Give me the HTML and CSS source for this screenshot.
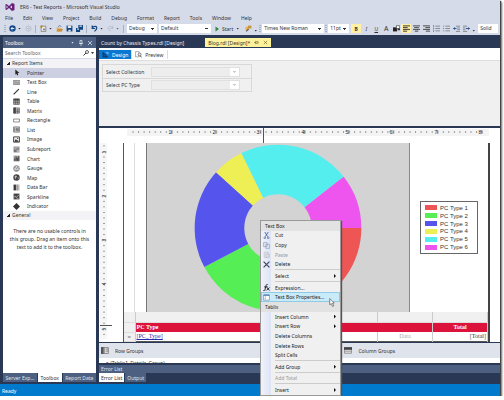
FILE: index.html
```html
<!DOCTYPE html>
<html lang="en">
<head>
    <meta charset="UTF-8">
    <meta name="viewport" content="width=device-width, initial-scale=1.0">
    <title>ER6 - Test Reports - Microsoft Visual Studio</title>
    <link rel="stylesheet" href="styles.css">
</head>
<body>

<div class="window">
    <header class="titlebar">
        <svg class="vs-logo" viewBox="0 0 20 16"><path fill="#68217a" fill-rule="evenodd" d="M14 0l5 2v12l-5 2-6-6-5 4-2-1V3l2-1 5 4zM14 5l-4 3 4 3zM3 5v6l3-3z"/></svg>
        <span>ER6 - Test Reports - Microsoft Visual Studio</span>
    </header>

    <nav class="menubar">
        <button>File</button>
        <button>Edit</button>
        <button>View</button>
        <button>Project</button>
        <button>Build</button>
        <button>Debug</button>
        <button>Format</button>
        <button>Report</button>
        <button>Tools</button>
        <button>Window</button>
        <button>Help</button>
    </nav>

    <div class="toolbar">
        <span class="grip"></span>
        <button class="tool wide" aria-label="Back"><svg viewBox="0 0 12 12"><circle cx="6" cy="6" r="5.5" fill="#164a8b"/><path d="M9 6H3.500M6 3.500L3.500 6 6 8.500" stroke="#fff" fill="none" stroke-width="1.500"/></svg><i class="caret"></i></button>
        <button class="tool" aria-label="Forward"><svg viewBox="0 0 12 12"><circle cx="6" cy="6" r="4.500" fill="none" stroke="#a5acba"/><path d="M3.500 6H8M6 4l2 2-2 2" stroke="#a5acba" fill="none"/></svg></button>
        <span class="divider"></span>
        <button class="tool wide" aria-label="New"><svg viewBox="0 0 12 12"><path d="M2 2h8v9H2z" fill="#eee" stroke="#555"/><path d="M0 3h5M2.500 0v5" stroke="#c68a1e" stroke-width="2"/><path d="M5 6h4v3H5z" fill="#888"/></svg><i class="caret"></i></button>
        <button class="tool" aria-label="Open"><svg viewBox="0 0 12 12"><path d="M1 4h4l1 1h4v6H1z" fill="#dcb67a"/><path d="M3 7h9l-2 4H1z" fill="#c7913a"/><path d="M4 3c1-3 4-2 5 0" stroke="#164a8b" fill="none"/></svg></button>
        <button class="tool" aria-label="Save"><svg viewBox="0 0 12 12"><path d="M1 1h10v10H1z" fill="#10457f"/><path d="M3 1h6v4H3zM4 8h4v3H4z" fill="#dfe6f2"/></svg></button>
        <button class="tool" aria-label="Save all"><svg viewBox="0 0 12 12"><path d="M4 0h8v8H4zM0 5h7v7H0z" fill="#10457f"/><path d="M6 1h4v2H6zM2 6h3v2H2z" fill="#dfe6f2"/></svg></button>
        <span class="divider"></span>
        <button class="tool wide" aria-label="Undo"><svg viewBox="0 0 12 12"><path d="M2 1v5h5M2 5c3-4 8-3 8 0 0 2-2 4-4 6" stroke="#10457f" stroke-width="2" fill="none"/></svg><i class="caret"></i></button>
        <button class="tool wide faded" aria-label="Redo"><svg viewBox="0 0 12 12"><path d="M10 1v5H5M10 5C7 1 2 2 2 5c0 2 2 4 4 6" stroke="#9299a8" stroke-width="1" fill="none"/></svg><i class="caret"></i></button>
        <span class="divider"></span>
        <select class="combo combo-config" aria-label="Configuration"><option>Debug</option></select>
        <select class="combo combo-platform" aria-label="Platform"><option>Default</option></select>
        <button class="start"><svg viewBox="0 0 8 10"><path d="M1 0l7 5-7 5z" fill="#2f8a3b"/></svg>Start<i class="caret"></i></button>
        <button class="tool" aria-label="Find in files"><svg viewBox="0 0 12 12"><path d="M1 3h6v6H1z" fill="#e0b060"/><path d="M5 1h6v5H5z" fill="#c9953c"/><path d="M2 11l4-4" stroke="#555" stroke-width="2"/></svg></button>
        <span class="overflow"></span>
        <span class="grip"></span>
        <select class="combo combo-font" aria-label="Font"><option>Times New Roman</option></select>
        <span class="grip"></span>
        <select class="combo combo-size" aria-label="Font size"><option>11pt</option></select>
        <div class="format">
            <button class="tool active"><b>B</b></button>
            <button class="tool"><em>I</em></button>
            <button class="tool"><u>U</u></button>
            <button class="tool letter">A</button>
            <button class="tool" aria-label="Background colour"><svg viewBox="0 0 12 12"><path d="M0 4h7v7H0z" fill="#222"/><path d="M6 1h5v5H6z" fill="#fff" stroke="#333"/><path d="M8 6h4v3H8z" fill="#333"/></svg></button>
            <button class="tool active" aria-label="Align left"><svg viewBox="0 0 12 12"><path d="M0 1.500h12M0 4.500h8M0 7.500h12M0 10.500h7" stroke="#222" stroke-width="1.500"/></svg></button>
            <button class="tool" aria-label="Align centre"><svg viewBox="0 0 12 12"><path d="M0 1.500h12M2 4.500h8M0 7.500h12M3 10.500h6" stroke="#333" stroke-width="1.500"/></svg></button>
            <button class="tool" aria-label="Align right"><svg viewBox="0 0 12 12"><path d="M0 1.500h12M4 4.500h8M0 7.500h12M5 10.500h7" stroke="#333" stroke-width="1.500"/></svg></button>
            <button class="tool" aria-label="Numbered list"><svg viewBox="0 0 12 12"><path d="M1 0v4M1 5v3M1 9v3M4 2h8M4 6h8M4 10h8" stroke="#555"/></svg></button>
            <button class="tool" aria-label="Bulleted list"><svg viewBox="0 0 12 12"><path d="M0 2h2M0 6h2M0 10h2M4 2h8M4 6h8M4 10h8" stroke="#555"/></svg></button>
            <button class="tool" aria-label="Decrease indent"><svg viewBox="0 0 12 12"><path d="M5 2h7M7 5h5M7 8h5M5 11h7" stroke="#555"/><path d="M6 6H1M3 4L1 6l2 2" stroke="#164a8b" fill="none" stroke-width="1.500"/></svg></button>
            <button class="tool" aria-label="Increase indent"><svg viewBox="0 0 12 12"><path d="M0 2h7M0 5h4M0 8h4M0 11h7" stroke="#555"/><path d="M5 6h6M9 4l2 2-2 2" stroke="#164a8b" fill="none" stroke-width="1.500"/></svg></button>
        </div>
        <span class="overflow"></span>
        <select class="combo combo-line" aria-label="Border style"><option>Solid</option></select>
    </div>

    <main class="workspace">
        <aside class="toolbox">
            <div class="panel-title"><span>Toolbox</span><i class="caret light"></i>
                <svg viewBox="0 0 8 12"><path d="M2 1h4v6H2zM0 7h8M4 7v5" stroke="#dfe4ee" fill="none" stroke-width="1.500"/></svg>
                <svg viewBox="0 0 8 12"><path d="M0 2l8 8M8 2l-8 8" stroke="#dfe4ee" stroke-width="1.500"/></svg>
            </div>
            <div class="search">
                <input type="text" placeholder="Search Toolbox" aria-label="Search Toolbox">
                <svg viewBox="0 0 12 12"><circle cx="8" cy="4" r="3" fill="none" stroke="#333" stroke-width="1.500"/><path d="M6 6l-5 5" stroke="#333" stroke-width="2"/></svg>
                <i class="caret"></i>
            </div>
            <div class="toolbox-list">
                <div class="group-title">Report Items</div>
                <ul class="items">
                    <li class="selected"><svg viewBox="0 0 12 12"><path d="M4 1v9l2-2 1 3 2-1-1-3h3z" fill="#222"/></svg>Pointer</li>
                    <li><svg viewBox="0 0 12 12"><path d="M.5 2.500h11v7H.5z" fill="#ddd" stroke="#555"/><path d="M2 5h5M2 7h7M9 4v4" stroke="#444"/></svg>Text Box</li>
                    <li><svg viewBox="0 0 12 12"><path d="M1 11l9-9" stroke="#333" stroke-width="2"/></svg>Line</li>
                    <li><svg viewBox="0 0 12 12"><path d="M1 2h10v9H1zM1 5h10M1 8h10M4.500 3v8M8 3v8" stroke="#444" fill="#bbb"/><path d="M1 1h10v3H1z" fill="#444"/></svg>Table</li>
                    <li><svg viewBox="0 0 12 12"><path d="M1 1.500h10v9H1zM5 5h6M5 8h6M8 3v8" stroke="#444" fill="#ccc"/><path d="M1 1h4v10H1z" fill="#444"/></svg>Matrix</li>
                    <li><svg viewBox="0 0 12 12"><path d="M1 3.500h10v5H1z" stroke="#444" fill="#fff"/></svg>Rectangle</li>
                    <li><svg viewBox="0 0 12 12"><path d="M1 1.500h10v9H1z" stroke="#444" fill="#ddd"/><path d="M2 4h2M2 6h2M2 8h2M5 4h5M5 6h5M5 8h5" stroke="#333"/></svg>List</li>
                    <li><svg viewBox="0 0 12 12"><path d="M1 1.500h10v9H1z" stroke="#333" stroke-width="1.500" fill="#eee"/><path d="M2 10l3-5 2 3 1-1 2 3z" fill="#333"/><circle cx="8" cy="4" r="1" fill="#333"/></svg>Image</li>
                    <li><svg viewBox="0 0 12 12"><path d="M1 1h10v10H1z" fill="#777"/><path d="M2 3h8M2 5h4M7 7h3v3H7z" stroke="#eee" fill="none"/></svg>Subreport</li>
                    <li><svg viewBox="0 0 12 12"><path d="M1 1h10v10H1z" fill="#999"/><path d="M3 10V6M5.500 10V3M8 10V5M10 10V2" stroke="#333" stroke-width="1.500"/></svg>Chart</li>
                    <li><svg viewBox="0 0 12 12"><circle cx="6" cy="6" r="5" stroke="#555" fill="#ddd"/><path d="M3 6l1-3M8 3l-2 4M9 6h1M4 9h4" stroke="#444"/></svg>Gauge</li>
                    <li><svg viewBox="0 0 12 12"><circle cx="6" cy="6" r="5.500" fill="#444"/><path d="M3 3l3 0 1 2-2 1v3L3 7zM8 6l2 0-1 3z" fill="#bbb"/></svg>Map</li>
                    <li><svg viewBox="0 0 12 12"><path d="M1 1h4v10H1z" fill="#333"/><path d="M6 1h2v10H6z" fill="#666"/><path d="M9 1h2v10H9z" fill="#aaa"/></svg>Data Bar</li>
                    <li><svg viewBox="0 0 12 12"><path d="M1 1h10v10H1z" fill="#444"/><path d="M2 8l2-3 2 3 4-5M6 10h4" stroke="#ddd" fill="none"/></svg>Sparkline</li>
                    <li><svg viewBox="0 0 12 12"><path d="M6 0l6 6-6 6-6-6z" fill="#333"/></svg>Indicator</li>
                </ul>
                <div class="group-title">General</div>
                <p class="hint">There are no usable controls in<br>this group. Drag an item onto this<br>text to add it to the toolbox.</p>
            </div>
            <div class="tabs">
                <button>Server Exp...</button>
                <button class="current">Toolbox</button>
                <button>Report Data</button>
            </div>
        </aside>

        <section class="editor">
            <div class="doc-tabs">
                <button class="doc-tab">Count by Chassis Types.rdl [Design]</button>
                <button class="doc-tab current">Blog.rdl [Design]*
                    <svg viewBox="0 0 12 12"><path d="M0 6h4M4 2v8M5 4h5v4H5" stroke="#6b5e2b" fill="none" stroke-width="1.500"/></svg>
                    <svg viewBox="0 0 12 12"><path d="M2 2l8 8M10 2l-8 8" stroke="#6b5e2b" stroke-width="1.500"/></svg>
                </button>
            </div>

            <div class="view-tabs">
                <button class="current"><svg viewBox="0 0 12 12"><path d="M1 1v10h10zM3 6l3 3H3z" fill="#0b3a66" fill-rule="evenodd"/><path d="M6 2h5v4z" fill="#8cc4ee"/></svg>Design</button>
                <button><svg viewBox="0 0 12 12"><path d="M1 1h6v9H1z" fill="#fff" stroke="#777"/><circle cx="8" cy="6" r="2.500" fill="#eee" stroke="#444"/><path d="M9 8l2 3" stroke="#444" stroke-width="1.500"/></svg>Preview</button>
            </div>

            <div class="parameters">
                <div class="param-grid">
                    <div class="param"><label for="collection">Select Collection</label><select id="collection" disabled></select></div>
                    <div class="param"><label for="pctype">Select PC Type</label><select id="pctype" disabled></select></div>
                </div>
            </div>

            <div class="design">
                <svg class="ruler-top" viewBox="0 0 372 15">
                    <defs>
                        <pattern id="ticks" x="4" width="5.540" height="15" patternUnits="userSpaceOnUse"><path d="M.5 3v2" stroke="#999"/></pattern>
                        <pattern id="halves" x="-17" width="44.300" height="15" patternUnits="userSpaceOnUse"><path d="M21.500 2v4" stroke="#777"/></pattern>
                    </defs>
                    <path d="M4 1h362v7H4z" fill="#f4f4f4"/>
                    <path d="M8 0h356v9H8z" fill="url(#ticks)"/>
                    <path d="M8 0h356v9H8z" fill="url(#halves)"/>
                    <g>
                        <text x="47" y="6">1</text><text x="91" y="6">2</text><text x="135" y="6">3</text><text x="180" y="6">4</text>
                        <text x="224" y="6">5</text><text x="268" y="6">6</text><text x="313" y="6">7</text><text x="357" y="6">8</text>
                    </g>
                    <path d="M140.500 0v15" stroke="#555"/>
                </svg>
                <div class="canvas">
                    <svg class="ruler-side" viewBox="0 0 14 198">
                        <defs>
                            <pattern id="vticks" y="8" width="14" height="5.540" patternUnits="userSpaceOnUse"><path d="M4 .5h2" stroke="#999"/></pattern>
                        </defs>
                        <path d="M1 0h7v196H1z" fill="#f6f6f6"/>
                        <path d="M0 2h14v192H0z" fill="url(#vticks)"/>
                        <g>
                            <text transform="translate(7 9) rotate(-90)">1</text>
                            <text transform="translate(7 53) rotate(-90)">2</text>
                            <text transform="translate(7 97) rotate(-90)">3</text>
                            <text transform="translate(7 141) rotate(-90)">4</text>
                            <text transform="translate(7 186) rotate(-90)">5</text>
                        </g>
                        <path d="M1 182.500h12" stroke="#555"/>
                    </svg>
                    <div class="report">
                        <div class="chart-row">
                            <svg class="chart" viewBox="0 1 264 169">
                                <!-- centre 132,86  outer 84  inner 34 -->
                                <path fill="#ee5555" d="M216 86A84 84 0 0 1 160.700 164.900L143.600 117.900A34 34 0 0 0 166 86z"/>
                                <path fill="#55ee55" d="M160.700 164.900A84 84 0 0 1 57.800 125.400L102 102A34 34 0 0 0 143.600 117.900z"/>
                                <path fill="#5555ee" d="M57.800 125.400A84 84 0 0 1 69.600 29.800L106.700 63.300A34 34 0 0 0 102 102z"/>
                                <path fill="#eeee55" d="M69.600 29.800A84 84 0 0 1 95.200 10.500L117.100 55.400A34 34 0 0 0 106.700 63.300z"/>
                                <path fill="#55eeee" d="M95.200 10.500A84 84 0 0 1 198.200 34.300L158.800 65.100A34 34 0 0 0 117.100 55.400z"/>
                                <path fill="#ee55ee" d="M198.200 34.300A84 84 0 0 1 216 86L166 86A34 34 0 0 0 158.800 65.100z"/>
                            </svg>
                            <ul class="legend">
                                <li><i class="red"></i>PC Type 1</li>
                                <li><i class="green"></i>PC Type 2</li>
                                <li><i class="blue"></i>PC Type 3</li>
                                <li><i class="yellow"></i>PC Type 4</li>
                                <li><i class="cyan"></i>PC Type 5</li>
                                <li><i class="magenta"></i>PC Type 6</li>
                            </ul>
                        </div>
                        <table class="tablix">
                            <colgroup><col class="col-handle"><col><col class="col-data"><col class="col-data"></colgroup>
                            <tr class="handles"><td></td><td></td><td></td><td></td></tr>
                            <tr class="head"><td></td><th colspan="2">PC Type</th><th class="total">Total</th></tr>
                            <tr class="detail"><td>≡</td><td><u>[PC_Type]</u></td><td class="ghost">Data</td><td class="sum">[Total]</td></tr>
                        </table>
                    </div>
                </div>
            </div>

            <div class="groups">
                <div><svg viewBox="0 0 12 10"><path d="M0 .5h11v9H0zM5 1v8M7 3h4M7 6h4" fill="#ddd" stroke="#666"/><path d="M0 0h4v10H0z" fill="#555"/></svg>Row Groups</div>
                <div><svg viewBox="0 0 12 10"><path d="M.5 1h11v8H.5zM1 6h10" fill="#eee" stroke="#666"/><path d="M0 0h12v4H0z" fill="#444"/></svg>Column Groups</div>
            </div>
            <div class="group-rows"><span>≡ (Tablix1_Details_Group)</span></div>
            <div class="error-title">Error List</div>
            <div class="tabs">
                <button class="current">Error List</button>
                <button>Output</button>
            </div>
        </section>
    </main>

    <footer class="status">Ready</footer>
</div>

<!-- right click menu over the report -->
<div class="context-menu">
    <div class="menu-head">Text Box</div>
    <button><svg viewBox="0 0 12 12"><path d="M3 0l5 8M9 0L4 8" stroke="#4a5f9a" stroke-width="1.500"/><circle cx="3" cy="10" r="1.500" fill="none" stroke="#33508f"/><circle cx="9" cy="10" r="1.500" fill="none" stroke="#33508f"/></svg>Cut</button>
    <button><svg viewBox="0 0 12 12"><path d="M1 1h6v7H1zM5 4h6v7H5z" fill="#e4e9f4" stroke="#8391b5"/></svg>Copy</button>
    <button disabled><svg viewBox="0 0 12 12"><path d="M2 2h7v9H2zM5 5h6v6H5z" fill="#e3e3e8" stroke="#b9bcc8"/></svg>Paste</button>
    <button><svg viewBox="0 0 12 12"><path d="M1 1l10 10M11 1L1 11" stroke="#3b4463" stroke-width="2"/></svg>Delete</button>
    <hr>
    <button class="sub">Select</button>
    <hr>
    <button><svg viewBox="0 0 12 12"><path d="M8 1C6 0 5 2 5 4L3 11c0 1-2 1-3 0M2 5h6M7 6l4 5M11 6l-5 5" stroke="#111" stroke-width="1.500" fill="none"/></svg>Expression...</button>
    <button class="hover"><svg viewBox="0 0 12 12"><path d="M1 1.500h10v9H1z" fill="#fff" stroke="#5e7ca5"/><path d="M1 1h10v2H1z" fill="#4774b0"/><path d="M3 5h2M3 8h2" stroke="#555"/></svg>Text Box Properties...</button>
    <div class="menu-head">Tablix</div>
    <button class="sub">Insert Column</button>
    <button class="sub">Insert Row</button>
    <button>Delete Columns</button>
    <button>Delete Rows</button>
    <button>Split Cells</button>
    <hr>
    <button class="sub">Add Group</button>
    <hr>
    <button disabled>Add Total</button>
    <hr>
    <button class="sub">Insert</button>
    <svg class="cursor" viewBox="0 0 10 16"><path d="M1 1v11l3-2 2 5 2-1-2-5h3z" fill="#fff" stroke="#333"/></svg>
</div>

</body>
</html>
```

FILE: styles.css
```css
* {
    box-sizing: border-box;
}
body {
    margin: 0;
    background-color: #fff;
    color: #333;
    font: 5px/8px "Noto Sans", "Open Sans", sans-serif;
    overflow: hidden;
    position: relative;
}
button, select, input {
    font: inherit;
    color: inherit;
    background: none;
    border: 0;
    border-radius: 0;
    margin: 0;
    padding: 0;
    white-space: nowrap;
}
svg {
    flex: none;
    display: block;
}
ul {
    list-style: none;
    margin: 0;
    padding: 0;
}
.window {
    display: flex;
    flex-direction: column;
    min-height: calc(100vh - 4px);
    margin-right: 4px;
    background-color: #293955;
    box-shadow: 1px 1px 1px #444, 2px 2px 2px #777;
}

/* title, menu and toolbar */
.titlebar {
    display: flex;
    align-items: center;
    gap: 5px;
    height: 14px;
    padding-left: 5px;
    background-color: #d6dbe9;
}
.vs-logo {
    width: 10px;
    height: 8px;
}
.menubar {
    display: flex;
    gap: 10px;
    height: 8px;
    padding-left: 5px;
    background-color: #d6dbe9;
}
.toolbar {
    display: flex;
    align-items: center;
    height: 13px;
    padding: 0 2px 0 3px;
    background-color: #d6dbe9;
}
.grip {
    flex: none;
    width: 2px;
    height: 8px;
    margin: 0 1px;
    background: repeating-linear-gradient(#a9b1c5 0 1px, transparent 1px 2px);
}
.divider {
    width: 1px;
    height: 8px;
    margin: 0 2px;
    background-color: #a9b1c5;
}
.tool {
    flex: none;
    display: flex;
    align-items: center;
    justify-content: center;
    gap: 2px;
    width: 10px;
    height: 9px;
}
.tool.wide {
    width: 16px;
}
.tool svg {
    width: 7px;
    height: 7px;
}
.tool.active {
    background-color: #fff0a5;
}
.tool.letter {
    font-size: 7px;
}
.faded {
    opacity: 0.7;
}
.caret {
    flex: none;
    width: 3px;
    height: 2px;
    background-color: #333;
    clip-path: polygon(0 0, 100% 0, 50% 100%);
}
.caret.light {
    background-color: #dfe4ee;
}
.combo {
    appearance: none;
    height: 9px;
    padding: 0 2px;
    line-height: 9px;
    background: #fff conic-gradient(from -45deg at 50% 100%, #333 90deg, transparent 0) no-repeat right 3px center / 4px 2px;
}
.combo-config {
    width: 30px;
    margin-left: 1px;
}
.combo-platform {
    width: 52px;
    margin-left: 2px;
}
.combo-font {
    width: 62px;
}
.combo-size {
    width: 21px;
}
.combo-line {
    flex: 1;
    min-width: 0;
    margin-left: 2px;
    background: #fff;
}
.start {
    display: flex;
    align-items: center;
    gap: 3px;
    margin: 0 4px;
}
.start svg {
    width: 4px;
    height: 6px;
}
.overflow {
    width: 3px;
    height: 2px;
    margin: 4px 1px 0;
    background-color: #333;
    clip-path: polygon(0 0, 100% 0, 50% 100%);
}
.format {
    display: flex;
    padding-left: 2px;
}

/* toolbox */
.workspace {
    flex: 1;
    display: flex;
    gap: 3px;
    padding: 2px 0 2px 3px;
}
.toolbox {
    flex: none;
    width: 93px;
    display: flex;
    flex-direction: column;
}
.panel-title {
    display: flex;
    align-items: center;
    gap: 5px;
    height: 11px;
    padding: 0 4px 0 2px;
    color: #fff;
    background-color: #4d6082;
}
.panel-title span {
    flex: 1;
}
.panel-title svg {
    width: 4px;
    height: 6px;
}
.search {
    display: flex;
    align-items: center;
    gap: 2px;
    height: 11px;
    padding: 0 2px;
    background-color: #fff;
    border-bottom: 1px solid #d6dbe9;
}
.search input {
    flex: 1;
    min-width: 0;
}
.search input::placeholder {
    color: #666;
    opacity: 1;
}
.search svg {
    width: 6px;
    height: 6px;
}
.toolbox-list {
    flex: 1;
    background-color: #fff;
}
.group-title {
    height: 9px;
    padding-left: 9px;
    background: #f3f3f5 linear-gradient(135deg, transparent 50%, #222 50%) no-repeat 4px 3px / 3px 3px;
}
.items {
    display: grid;
    grid-auto-rows: 1fr;
    height: 143px;
}
.items li {
    display: flex;
    align-items: center;
    gap: 7px;
    padding-left: 10px;
}
.items li.selected {
    background-color: #ccd0e2;
}
.items svg {
    width: 7px;
    height: 7px;
}
.hint {
    margin: 7px 0 0;
    text-align: center;
    white-space: nowrap;
}
.tabs {
    display: flex;
    gap: 1px;
    height: 9px;
}
.tabs button {
    padding: 0 2px;
    color: #dfe4ee;
    background-color: #4d6082;
}
.toolbox .tabs button {
    flex: auto;
    padding: 0 1px;
}
.tabs .current {
    color: #333;
    background-color: #fff;
}

/* document area */
.editor {
    flex: 1;
    min-width: 0;
    display: flex;
    flex-direction: column;
}
.doc-tabs {
    display: flex;
    gap: 21px;
    height: 11px;
    padding: 1px 2px;
}
.doc-tab {
    display: flex;
    align-items: center;
    gap: 3px;
    color: #e6eaf3;
}
.doc-tab.current {
    gap: 4px;
    padding: 0 3px;
    color: #333;
    background-color: #fff29d;
}
.doc-tab svg {
    width: 5px;
    height: 5px;
}
.view-tabs {
    display: flex;
    height: 13px;
    padding: 2px 0 1px 0;
    background-color: #fff;
    border-bottom: 1px solid #dedede;
}
.view-tabs button {
    display: flex;
    align-items: center;
    gap: 3px;
    padding: 0 3px;
    border-right: 1px solid #ddd;
}
.view-tabs .current {
    color: #fff;
    background-color: #0a78d0;
}
.view-tabs svg {
    width: 7px;
    height: 7px;
}
.parameters {
    height: 65px;
    padding: 3px;
    background-color: #f0f0f0;
}
.param-grid {
    width: 150px;
    border: 1px solid #d8d8d8;
}
.param {
    display: flex;
    align-items: center;
    height: 13px;
    padding-left: 3px;
}
.param + .param {
    border-top: 1px solid #d8d8d8;
}
.param label {
    width: 45px;
    white-space: nowrap;
}
.param select {
    appearance: none;
    width: 89px;
    height: 10px;
    border: 1px solid #e0e0e0;
    opacity: 1;
    background:
        conic-gradient(from -45deg at 50% 100%, #ccc 90deg, transparent 0) no-repeat right 3px center / 4px 2px,
        linear-gradient(#fff, #fff) no-repeat right / 9px 100%,
        #ededed;
}

/* report designer */
.design {
    flex: 1;
    background-color: #fff;
    border-top: 2px solid #293955;
}
.design text {
    font: 5px "Liberation Sans", Arial, sans-serif;
    text-anchor: middle;
    fill: #222;
}
.ruler-top {
    width: 372px;
    height: 15px;
    margin-left: 24px;
}
.canvas {
    display: flex;
    gap: 10px;
    padding-right: 10px;
}
.ruler-side {
    width: 14px;
    height: 198px;
}
.report {
    flex: 1;
    min-width: 0;
    border-left: 1px solid #555;
    border-right: 2px solid #444;
}
.chart-row {
    display: flex;
    align-items: center;
    margin-left: 10px;
    padding-left: 11px;
    border-left: 1px solid #ddd;
}
.chart {
    flex: 1;
    min-width: 0;
    height: 169px;
    background-color: #d3d3d3;
    border-left: 1px solid #777;
    border-right: 1px solid #888;
}
.legend {
    display: grid;
    grid-auto-rows: 1fr;
    width: 58px;
    height: 53px;
    margin: 0 10px;
    padding: 2px 4px;
    border: 1px solid #666;
    font: 6px "Liberation Sans", Arial, sans-serif;
}
.legend li {
    display: flex;
    align-items: center;
    gap: 3px;
}
.legend i {
    width: 12px;
    height: 5px;
}
.red { background-color: #ee5555; }
.green { background-color: #55ee55; }
.blue { background-color: #5555ee; }
.yellow { background-color: #eeee55; }
.cyan { background-color: #55eeee; }
.magenta { background-color: #ee55ee; }

.tablix {
    width: 100%;
    table-layout: fixed;
    border-collapse: collapse;
    font-family: "Liberation Serif", "Times New Roman", serif;
    font-size: 6px;
    border-bottom: 1px solid #555;
}
.tablix td, .tablix th {
    height: 10px;
    padding: 0 1px;
    border-right: 1px solid #ccc;
    text-align: left;
    white-space: nowrap;
}
.tablix .col-handle {
    width: 11px;
}
.tablix .col-data {
    width: 55px;
}
.tablix .handles td, .tablix td:first-child {
    background-color: #f0f0f0;
    border-bottom: 1px solid #ddd;
}
.tablix .head th {
    color: #fff;
    background-color: #dc143c;
}
.tablix .head .total {
    text-align: center;
}
.tablix .detail td {
    height: 9px;
}
.tablix .detail td:first-child {
    text-align: center;
    color: #777;
}
.tablix .detail u {
    color: #2a2ab0;
}
.tablix .detail .ghost {
    color: #aaa;
    text-align: center;
}
.tablix .detail .sum {
    text-align: right;
}

.groups {
    display: grid;
    grid-template-columns: 61% 1fr;
    align-items: center;
    height: 16px;
    padding-left: 2px;
    background-color: #dfe3ec;
    border-top: 1px solid #293955;
}
.groups div {
    display: flex;
    align-items: center;
    gap: 6px;
}
.groups svg {
    width: 8px;
    height: 7px;
}
.group-rows {
    height: 5px;
    padding: 1px 7px 0;
    background-color: #fff;
    overflow: hidden;
}
.group-rows span {
    display: block;
}
.error-title {
    height: 8px;
    margin-top: 2px;
    padding: 0 2px;
    color: #dfe4ee;
    background-color: #4d6082;
}
.status {
    height: 12px;
    padding: 3px 2px 0;
    color: #fff;
    background-color: #007acc;
}

/* context menu */
.context-menu {
    position: absolute;
    left: 260px;
    top: 220px;
    display: flex;
    flex-direction: column;
    width: 81px;
    height: 176px;
    border: 1px solid #999;
    background: linear-gradient(90deg, #f0f3fb 0, #dde3f3 10px, #f0f0f0 10px);
    box-shadow: 1px 1px 1px #555;
}
.context-menu button, .menu-head {
    flex: 1;
    display: flex;
    align-items: center;
    color: #222;
}
.context-menu button {
    gap: 5px;
    padding: 0 4px 0 14px;
}
.context-menu button:has(svg) {
    padding-left: 2px;
}
.context-menu button svg {
    width: 7px;
    height: 7px;
}
.context-menu button:disabled {
    color: #999;
}
.context-menu .hover {
    background-color: #c9eaf8;
    outline: 1px solid #8fcbe6;
    outline-offset: -1px;
}
.menu-head {
    padding-left: 4px;
    background-color: #e2e2e2;
}
.context-menu hr {
    flex: none;
    width: 65px;
    height: 2px;
    margin: 0 0 0 14px;
    border: 0;
    border-top: 1px solid #ccc;
}
.sub::after {
    content: "";
    width: 2px;
    height: 4px;
    margin-left: auto;
    background-color: #111;
    clip-path: polygon(0 0, 100% 50%, 0 100%);
}
.context-menu .cursor {
    position: absolute;
    right: 5px;
    top: 77px;
    width: 6px;
    height: 9px;
}
```
